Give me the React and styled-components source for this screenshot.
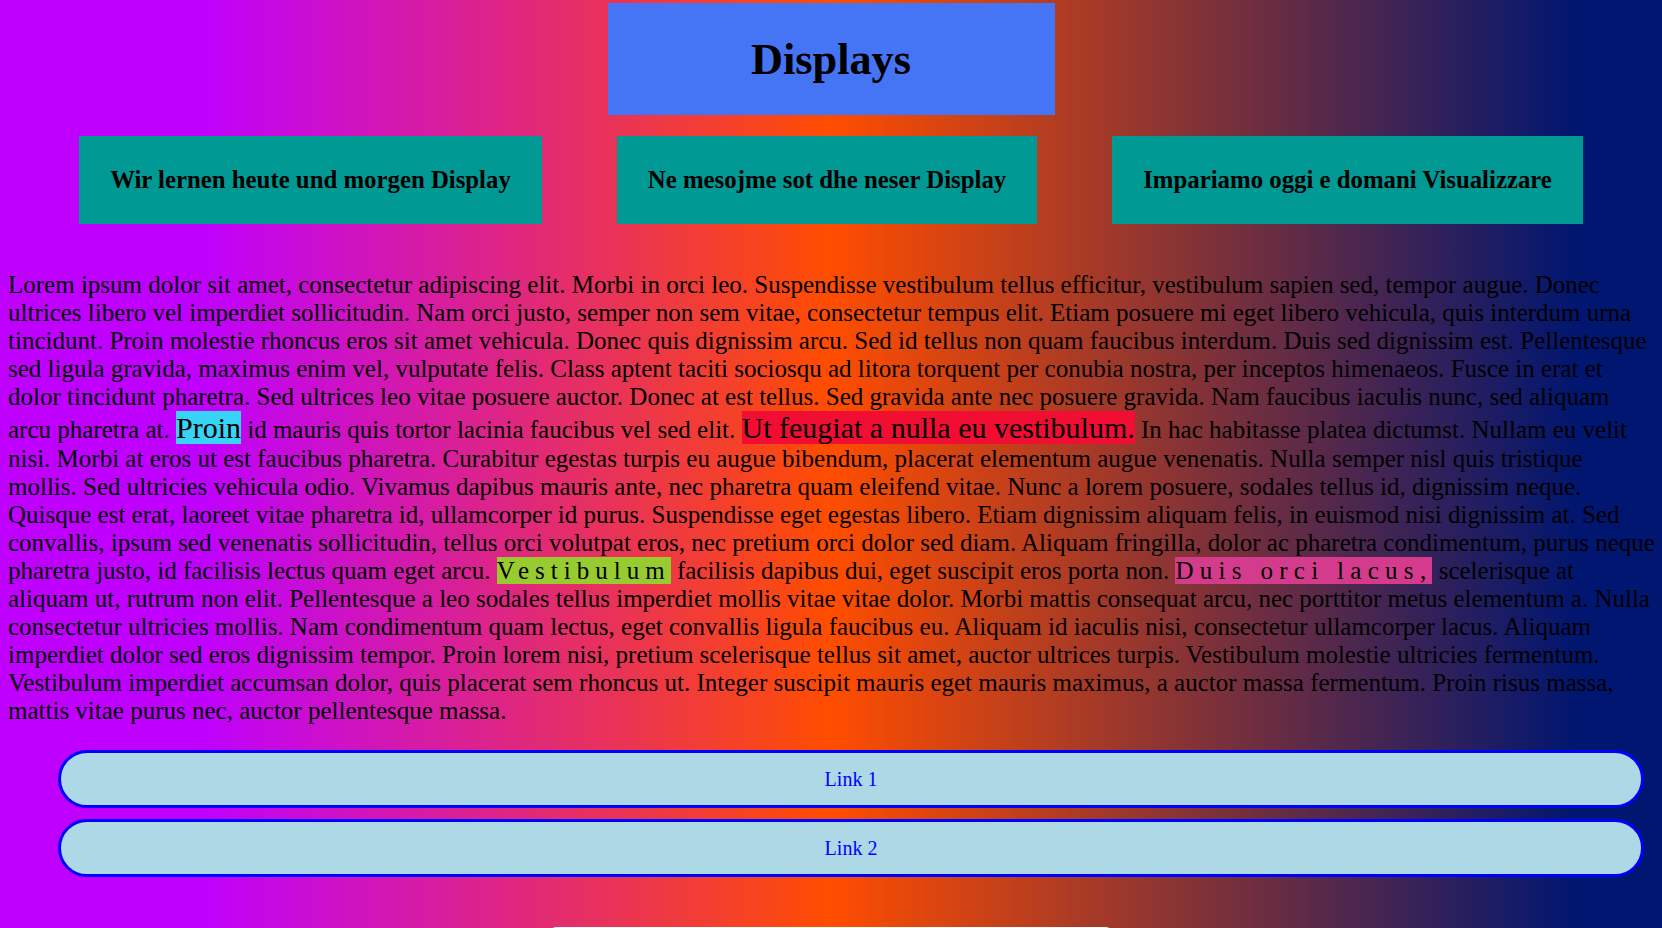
import React from 'react';
import styled, {createGlobalStyle} from 'styled-components';

const GlobalStyle = createGlobalStyle`
  html, body {
    margin: 0;
    padding: 0;
  }
  body {
    min-height: 100vh;
    font-family: "Liberation Serif", "Times New Roman", serif;
    color: #000;
    background: linear-gradient(to right, #bf00ff 12%, #ff4d00 50%, #001670 95%);
    background-attachment: fixed;
  }
`;

const cards = [
  'Wir lernen heute und morgen Display',
  'Ne mesojme sot dhe neser Display',
  'Impariamo oggi e domani Visualizzare',
];

const links = ['Link 1', 'Link 2'];

const App = () => {
  return (
    <Page>
      <GlobalStyle />
      <Title>Displays</Title>
      <CardRow>
        {cards.map((c) => (
          <Card key={c}>{c}</Card>
        ))}
      </CardRow>
      <Text>
        Lorem ipsum dolor sit amet, consectetur adipiscing elit. Morbi in orci leo. Suspendisse vestibulum tellus efficitur, vestibulum sapien sed, tempor augue. Donec ultrices libero vel imperdiet sollicitudin. Nam orci justo, semper non sem vitae, consectetur tempus elit. Etiam posuere mi eget libero vehicula, quis interdum urna tincidunt. Proin molestie rhoncus eros sit amet vehicula. Donec quis dignissim arcu. Sed id tellus non quam faucibus interdum. Duis sed dignissim est. Pellentesque sed ligula gravida, maximus enim vel, vulputate felis. Class aptent taciti sociosqu ad litora torquent per conubia nostra, per inceptos himenaeos. Fusce in erat et dolor tincidunt pharetra. Sed ultrices leo vitae posuere auctor. Donec at est tellus. Sed gravida ante nec posuere gravida. Nam faucibus iaculis nunc, sed aliquam arcu pharetra at.{' '}
        <Mark bg="#38d4f7" size="30px">Proin</Mark> id mauris quis tortor lacinia faucibus vel sed elit.{' '}
        <Mark bg="#f20d33" size="30px">Ut feugiat a nulla eu vestibulum.</Mark> In hac habitasse platea dictumst. Nullam eu velit nisi. Morbi at eros ut est faucibus pharetra. Curabitur egestas turpis eu augue bibendum, placerat elementum augue venenatis. Nulla semper nisl quis tristique mollis. Sed ultricies vehicula odio. Vivamus dapibus mauris ante, nec pharetra quam eleifend vitae. Nunc a lorem posuere, sodales tellus id, dignissim neque. Quisque est erat, laoreet vitae pharetra id, ullamcorper id purus. Suspendisse eget egestas libero. Etiam dignissim aliquam felis, in euismod nisi dignissim at. Sed convallis, ipsum sed venenatis sollicitudin, tellus orci volutpat eros, nec pretium orci dolor sed diam. Aliquam fringilla, dolor ac pharetra condimentum, purus neque pharetra justo, id facilisis lectus quam eget arcu.{' '}
        <Mark bg="#98cb30" spacing="6px">Vestibulum</Mark> facilisis dapibus dui, eget suscipit eros porta non.{' '}
        <Mark bg="#d43b8c" spacing="6.3px">Duis orci lacus,</Mark> scelerisque at aliquam ut, rutrum non elit. Pellentesque a leo sodales tellus imperdiet mollis vitae vitae dolor. Morbi mattis consequat arcu, nec porttitor metus elementum a. Nulla consectetur ultricies mollis. Nam condimentum quam lectus, eget convallis ligula faucibus eu. Aliquam id iaculis nisi, consectetur ullamcorper lacus. Aliquam imperdiet dolor sed eros dignissim tempor. Proin lorem nisi, pretium scelerisque tellus sit amet, auctor ultrices turpis. Vestibulum molestie ultricies fermentum. Vestibulum imperdiet accumsan dolor, quis placerat sem rhoncus ut. Integer suscipit mauris eget mauris maximus, a auctor massa fermentum. Proin risus massa, mattis vitae purus nec, auctor pellentesque massa.
      </Text>
      <LinkList>
        {links.map((l) => (
          <PillLink key={l} href="#">{l}</PillLink>
        ))}
      </LinkList>
      <FooterBox />
    </Page>
  );
};

export default App;

const Page = styled.div`
  padding: 3px 8px 0;
`;

const Title = styled.h1`
  width: 447px;
  height: 112px;
  margin: 0 auto;
  display: flex;
  align-items: center;
  justify-content: center;
  background: #4575f5;
  font-size: 44.3px;
  font-weight: bold;
`;

const CardRow = styled.div`
  display: flex;
  justify-content: center;
  gap: 75px;
  margin-top: 21px;
`;

const Card = styled.h2`
  margin: 0;
  height: 88px;
  padding: 0 31px;
  display: flex;
  align-items: center;
  background: #009994;
  font-size: 24.8px;
  font-weight: bold;
  white-space: nowrap;
`;

const Text = styled.p`
  margin: 47px -3px 0 0;
  font-size: 25px;
  line-height: normal;
`;

const Mark = styled.span`
  background: ${(p) => p.bg};
  font-size: ${(p) => p.size || 'inherit'};
  letter-spacing: ${(p) => p.spacing || 'normal'};
`;

const LinkList = styled.nav`
  display: flex;
  flex-direction: column;
  gap: 11px;
  margin: 25px 10px 0 50px;
`;

const PillLink = styled.a`
  box-sizing: border-box;
  height: 58px;
  display: flex;
  align-items: center;
  justify-content: center;
  border: 3px solid #0000ff;
  border-radius: 30px;
  background: #add8e6;
  color: #0000ff;
  font-size: 20px;
  text-decoration: none;
`;

const FooterBox = styled.div`
  width: 562px;
  height: 80px;
  margin: 50px auto 0;
  background: #fff;
  border-radius: 6px 6px 0 0;
`;
